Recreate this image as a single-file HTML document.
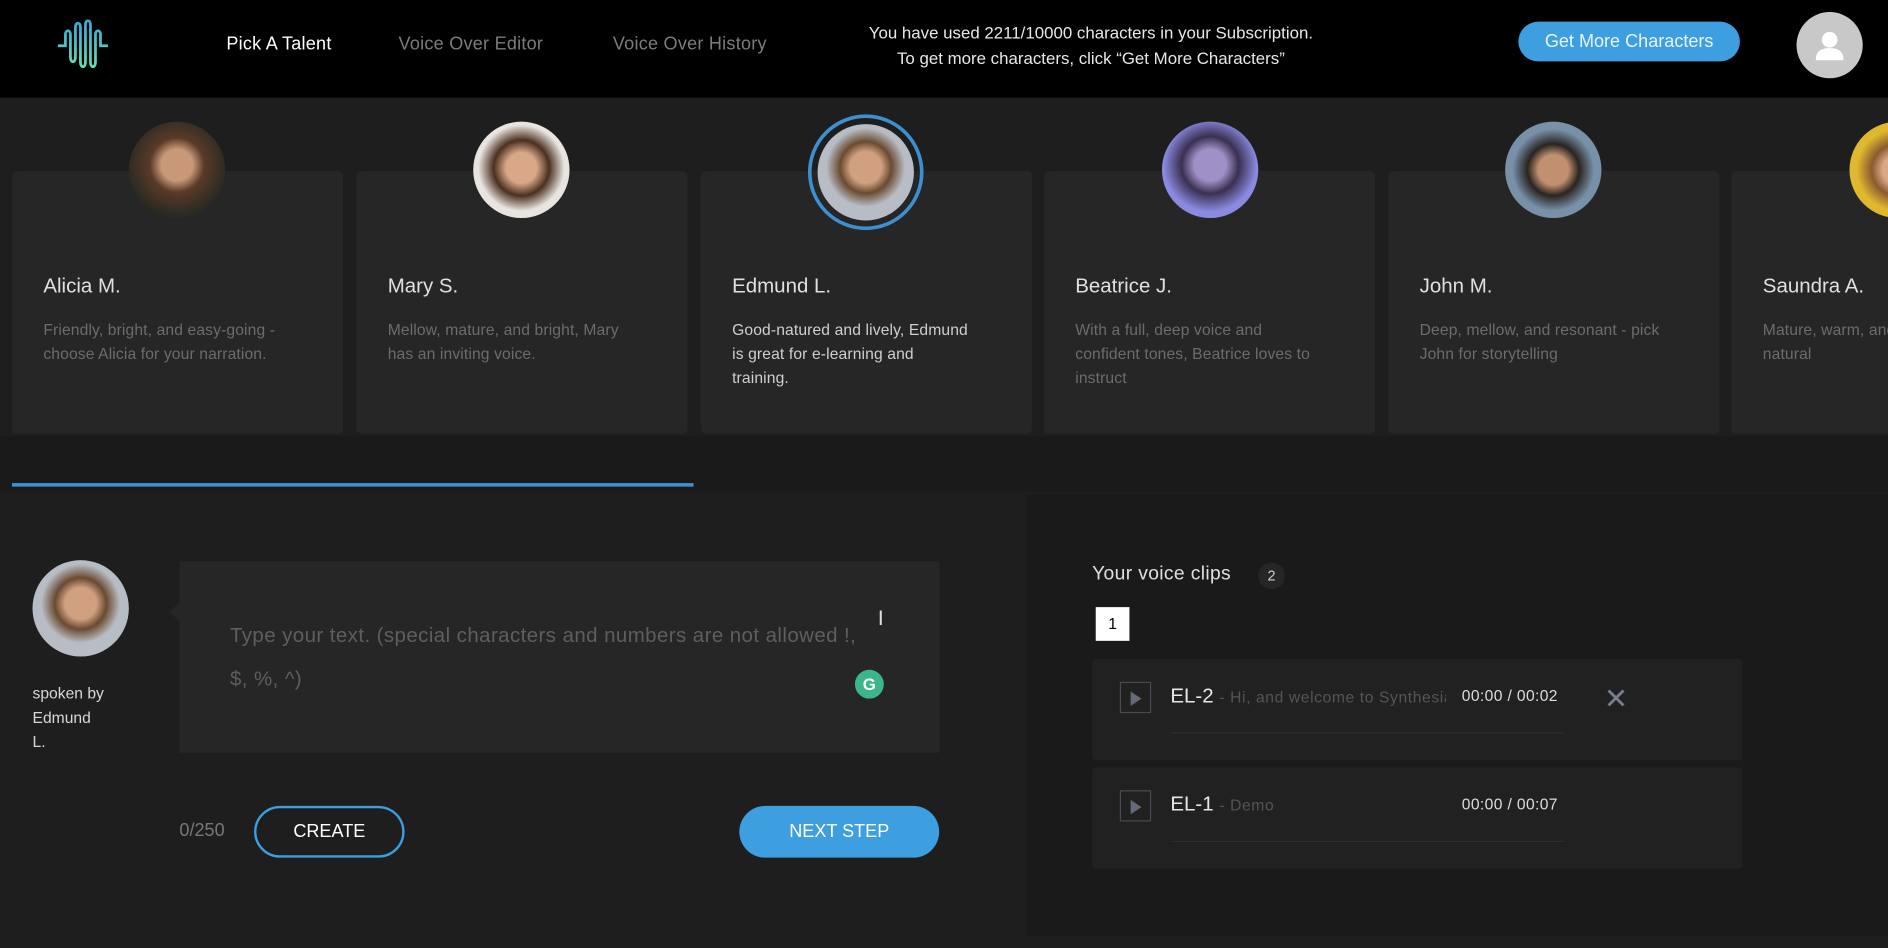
<!DOCTYPE html>
<html><head><meta charset="utf-8"><style>
*{margin:0;padding:0;box-sizing:border-box}
html,body{width:1888px;height:948px;overflow:hidden;background:#1c1c1c;font-family:"Liberation Sans",sans-serif}
#w{position:absolute;left:0;top:0;width:1568px;height:787px;transform:scale(1.2041,1.2046);transform-origin:0 0;background:#1e1e1e;overflow:hidden}
.a{position:absolute}
.hdr{left:0;top:0;width:1568px;height:81px;background:#000}
.nav{top:28px;font-size:15px;color:#7c7c7c;letter-spacing:.2px}
.card{top:142px;width:275px;height:218px;background:#262626;border-radius:4px}
.card .n{position:absolute;left:26px;top:86px;font-size:17px;color:#e0e0e0}
.card .d{position:absolute;left:26px;top:122px;width:228px;font-size:13px;line-height:20px;color:#6c6c6c;letter-spacing:.1px}
.av{width:80px;height:80px;border-radius:50%;top:101px;overflow:hidden}
.clip{left:907px;width:540px;height:84px;background:#212121;border-radius:3px}
.play{position:absolute;left:23px;top:19px;width:26px;height:26px;border:1px solid #4a4a50}
.play:after{content:"";position:absolute;left:8px;top:7px;border-left:9px solid #666a78;border-top:6px solid transparent;border-bottom:6px solid transparent}
.clip .t{position:absolute;left:65px;top:21px;font-size:17px;color:#e8e8e8;white-space:nowrap;width:230px;overflow:hidden}
.clip .t span{font-size:13px;color:#555;letter-spacing:.5px}
.clip .tm{position:absolute;left:307px;top:23px;font-size:13px;color:#ddd;letter-spacing:.3px}
.clip .ln{position:absolute;left:65px;top:61px;width:327px;height:1px;background:#2c2c2c}
</style></head><body><div id="w">
<div class="a hdr"></div>
<svg class="a" style="left:46px;top:16px" width="52" height="44" viewBox="0 0 50 42"><defs><linearGradient id="g" x1="0" y1="0" x2="0" y2="1"><stop offset="0" stop-color="#3aa8d8"/><stop offset="1" stop-color="#5fe0b8"/></linearGradient></defs><path d="M2 21h6v-9c0-4 4-4 4 0v18c0 5 4 5 4 0V6c0-4 4-4 4 0v28c0 5 4 5 4 0V4c0-4 4-4 4 0v30c0 5 4 5 4 0V12c0-4 4-4 4 0v9h6" fill="none" stroke="url(#g)" stroke-width="2.2"/></svg>
<div class="a nav" style="left:188px;color:#fff">Pick A Talent</div>
<div class="a nav" style="left:331px">Voice Over Editor</div>
<div class="a nav" style="left:509px">Voice Over History</div>
<div class="a" style="left:680px;top:17px;width:452px;text-align:center;font-size:14px;line-height:21px;color:#e8e8e8">You have used 2211/10000 characters in your Subscription.<br>To get more characters, click “Get More Characters”</div>
<div class="a" style="left:1261px;top:18px;width:184px;height:33px;border-radius:17px;background:#3d9fe0;color:#e8f4ff;font-size:15px;text-align:center;line-height:33px">Get More Characters</div>
<div class="a" style="left:1492px;top:10px;width:55px;height:55px;border-radius:50%;background:#c8c8c8"><svg width="55" height="55"><circle cx="27.5" cy="23" r="6.5" fill="#fff"/><path d="M16 40c0-8 5-10 11.5-10S39 32 39 40z" fill="#fff"/></svg></div>

<div class="a card" style="left:10px"><div class="n">Alicia M.</div><div class="d">Friendly, bright, and easy-going - choose Alicia for your narration.</div></div>
<div class="a card" style="left:296px"><div class="n">Mary S.</div><div class="d" style="width:215px">Mellow, mature, and bright, Mary has an inviting voice.</div></div>
<div class="a card" style="left:582px"><div class="n">Edmund L.</div><div class="d" style="color:#cfcfcf;width:200px">Good-natured and lively, Edmund is great for e-learning and training.</div></div>
<div class="a card" style="left:867px"><div class="n">Beatrice J.</div><div class="d" style="width:200px">With a full, deep voice and confident tones, Beatrice loves to instruct</div></div>
<div class="a card" style="left:1153px"><div class="n">John M.</div><div class="d">Deep, mellow, and resonant - pick John for storytelling</div></div>
<div class="a card" style="left:1438px"><div class="n">Saundra A.</div><div class="d">Mature, warm, and Saundra is a natural</div></div>

<div class="a av" style="left:107px;background:radial-gradient(circle at 50% 45%,#c89878 0 22%,#5a3a28 38%,#2a2a22 70%)"></div>
<div class="a av" style="left:393px;background:radial-gradient(circle at 50% 48%,#d8a888 0 22%,#4a3020 40%,#e8e4e0 62%)"></div>
<div class="a" style="left:671px;top:95px;width:96px;height:96px;border-radius:50%;border:3px solid #3d8fd0"></div>
<div class="a av" style="left:679px;top:103px;background:radial-gradient(circle at 50% 45%,#d0a080 0 22%,#6a4a30 36%,#b8bcc4 55%)"></div>
<div class="a av" style="left:965px;background:radial-gradient(circle at 50% 45%,#a090c8 0 22%,#3a3050 40%,#8a8ae0 65%)"></div>
<div class="a av" style="left:1250px;background:radial-gradient(circle at 50% 50%,#c09070 0 22%,#2a2420 38%,#7890a8 60%)"></div>
<div class="a av" style="left:1536px;background:radial-gradient(circle at 50% 50%,#d8a888 0 22%,#8a5a30 38%,#e0b830 60%)"></div>

<div class="a" style="left:0;top:362px;width:1568px;height:46px;background:#1a1a1a"></div>
<div class="a" style="left:10px;top:401px;width:566px;height:3px;background:#3d8fd0"></div>

<div class="a" style="left:852px;top:410px;width:716px;height:367px;background:#1a1a1a"></div>

<div class="a" style="left:27px;top:465px;width:80px;height:80px;border-radius:50%;background:radial-gradient(circle at 50% 45%,#d0a080 0 22%,#6a4a30 36%,#b8bcc4 55%)"></div>
<div class="a" style="left:27px;top:566px;font-size:13px;line-height:20px;color:#d8d8d8">spoken by<br>Edmund<br>L.</div>
<div class="a" style="left:149px;top:466px;width:631px;height:159px;background:#262626"></div>
<div class="a" style="left:141px;top:500px;border-right:8px solid #262626;border-top:8px solid transparent;border-bottom:8px solid transparent"></div>
<div class="a" style="left:191px;top:510px;font-size:17px;color:#5e5e5e;line-height:36px;width:560px;letter-spacing:.35px;white-space:nowrap">Type your text. (special characters and numbers are not allowed !,<br>$, %, ^)</div>
<div class="a" style="left:710px;top:556px;width:24px;height:24px;border-radius:50%;background:#3bb58a;color:#fff;font-size:14px;text-align:center;line-height:24px;font-weight:bold">G</div>
<div class="a" style="left:729px;top:503px;font-size:18px;color:#ddd">I</div>
<div class="a" style="left:149px;top:681px;font-size:15px;color:#777">0/250</div>
<div class="a" style="left:211px;top:669px;width:125px;height:43px;border:2px solid #3d9fe0;border-radius:22px;color:#fff;font-size:15px;text-align:center;line-height:39px">CREATE</div>
<div class="a" style="left:614px;top:669px;width:166px;height:43px;background:#3d9fe0;border-radius:22px;color:#fff;font-size:15px;text-align:center;line-height:43px">NEXT STEP</div>

<div class="a" style="left:907px;top:468px;font-size:16px;color:#e0e0e0;letter-spacing:.3px">Your voice clips</div>
<div class="a" style="left:1045px;top:467px;width:22px;height:22px;border-radius:50%;background:#262626;color:#ccc;font-size:12px;text-align:center;line-height:22px">2</div>
<div class="a" style="left:910px;top:504px;width:28px;height:28px;background:#fff;color:#000;font-size:13px;text-align:center;line-height:28px">1</div>
<div class="a clip" style="top:547px"><div class="play"></div><div class="t" style="width:229px">EL-2 <span>- Hi, and welcome to Synthesia</span></div><div class="tm">00:00 / 00:02</div><div style="position:absolute;left:425px;top:19px;font-size:24px;color:#7a7e90">✕</div><div class="ln"></div></div>
<div class="a clip" style="top:637px"><div class="play"></div><div class="t">EL-1 <span>- Demo</span></div><div class="tm">00:00 / 00:07</div><div class="ln"></div></div>
</div></body></html>
